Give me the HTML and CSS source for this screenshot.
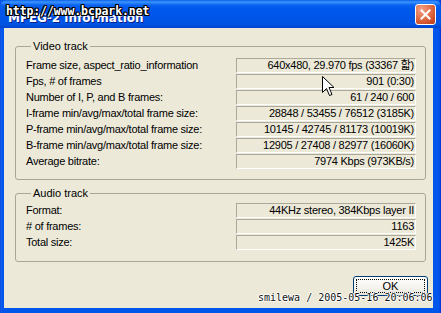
FILE: index.html
```html
<!DOCTYPE html>
<html>
<head>
<meta charset="utf-8">
<link rel="stylesheet" href="styles.css">
</head>
<body>
<div class="window">
  <div class="titlebar">
    <span class="title">MPEG-2 information</span>
    <button class="close" aria-label="Close">
      <svg width="11" height="11" viewBox="0 0 11 11"><path d="M1.5 1.5 L9.5 9.5 M9.5 1.5 L1.5 9.5" stroke="#fff" stroke-width="2" stroke-linecap="square"/></svg>
    </button>
    <span class="title-mark">http://www.bcpark.net</span>
  </div>
  <div class="client">
    <fieldset class="group video">
      <legend>Video track</legend>
      <div class="rows">
        <span class="label">Frame size, aspect_ratio_information</span><span class="value">640x480, 29.970 fps (33367 핣)</span>
        <span class="label">Fps, # of frames</span><span class="value">901 (0:30)</span>
        <span class="label">Number of I, P, and B frames:</span><span class="value">61 / 240 / 600</span>
        <span class="label">I-frame min/avg/max/total frame size:</span><span class="value">28848 / 53455 / 76512 (3185K)</span>
        <span class="label">P-frame min/avg/max/total frame size:</span><span class="value">10145 / 42745 / 81173 (10019K)</span>
        <span class="label">B-frame min/avg/max/total frame size:</span><span class="value">12905 / 27408 / 82977 (16060K)</span>
        <span class="label">Average bitrate:</span><span class="value">7974 Kbps (973KB/s)</span>
      </div>
    </fieldset>
    <fieldset class="group audio">
      <legend>Audio track</legend>
      <div class="rows">
        <span class="label">Format:</span><span class="value">44KHz stereo, 384Kbps layer II</span>
        <span class="label"># of frames:</span><span class="value">1163</span>
        <span class="label">Total size:</span><span class="value">1425K</span>
      </div>
    </fieldset>
    <div class="actions"><button class="ok"><span class="focus">OK</span></button></div>
  </div>
  <div class="watermark">smilewa / 2005-05-16 20:06:06</div>
  <svg class="cursor" width="13" height="21" viewBox="0 0 13 21"><path d="M0.5 0.5 L0.5 16.5 L4.5 12.5 L7.5 19.5 L10 18.5 L7 11.5 L12 11.5 Z" fill="#fff" stroke="#000" stroke-width="1" stroke-linejoin="miter"/></svg>
</div>
</body>
</html>
```

FILE: styles.css
```css
html, body {
  margin: 0;
  padding: 0;
  background: #ECE9D8;
}
.window {
  position: relative;
  width: 441px;
  height: 313px;
  box-sizing: border-box;
  display: flex;
  flex-direction: column;
  background: linear-gradient(to right, #0831D9 0, #166AEE 1px, #0055EA 2px, #0055EA calc(100% - 2px), #0831D9 100%);
  font-family: "Liberation Sans", Arial, sans-serif;
  font-size: 11px;
  color: #000;
  overflow: hidden;
}
.titlebar {
  position: relative;
  height: 28px;
  flex: none;
  display: flex;
  align-items: center;
  justify-content: space-between;
  padding: 0 5px 0 8px;
  background: linear-gradient(to bottom, #0A5FE6 0, #3D95FF 2px, #0A63F0 5px, #0058EE 9px, #0055E8 18px, #0054E3 24px, #0049D6 27px, #003DCB 28px);
  border-radius: 7px 7px 0 0;
}
.title {
  font-family: "DejaVu Sans", sans-serif;
  font-weight: bold;
  font-size: 12px;
  color: #fff;
  margin-top: 7px;
  text-shadow: 1px 1px 0 #0A1E8C;
}
.title-mark {
  position: absolute;
  left: 6px;
  top: 4px;
  font-family: "DejaVu Sans Mono", monospace;
  font-weight: bold;
  font-size: 11.5px;
  letter-spacing: -0.1px;
  color: #fff;
  text-shadow: 1px 0 0 #000, -1px 0 0 #000, 0 1px 0 #000, 0 -1px 0 #000, 1px 1px 0 #000, -1px -1px 0 #000, 1px -1px 0 #000, -1px 1px 0 #000;
}
.close {
  width: 21px;
  height: 21px;
  padding: 0;
  margin: 0;
  border: 1px solid #fff;
  border-radius: 3px;
  background: radial-gradient(circle at 30% 25%, #F0A088 0, #E5764F 40%, #CC4A26 80%, #B8391A 100%);
  display: flex;
  align-items: center;
  justify-content: center;
  margin-top: 1px;
}
.client {
  flex: 1;
  margin: 0 8px 5px 4px;
  background: #ECE9D8;
  padding: 12px 7px 0 11px;
  display: flex;
  flex-direction: column;
}
.group {
  margin: 0;
  border: 1px solid #A8A797;
  border-radius: 3px;
  padding: 5px 9px 10px 10px;
  min-width: 0;
}
.group legend {
  padding: 0 2px;
  margin-left: 5px;
  line-height: 13px;
  color: #000;
}
.audio {
  margin-top: 7px;
  padding-top: 3px;
  padding-bottom: 11px;
}
.rows {
  display: grid;
  grid-template-columns: 1fr 180px;
  row-gap: 1px;
}
.label {
  line-height: 15px;
  height: 15px;
  white-space: nowrap;
  letter-spacing: -0.25px;
}
.value {
  height: 15px;
  box-sizing: border-box;
  line-height: 13px;
  border-style: solid;
  border-width: 1px;
  border-color: #ACA899 #FFFFFF #FFFFFF #ACA899;
  text-align: right;
  padding-right: 1px;
  white-space: nowrap;
  letter-spacing: -0.25px;
  font-family: "Liberation Sans", "Noto Sans CJK KR", sans-serif;
}
.actions {
  display: flex;
  justify-content: flex-end;
  margin-top: 14px;
  margin-right: -2px;
}
.ok {
  width: 75px;
  height: 20px;
  padding: 2px;
  border: 1px solid #003C74;
  border-radius: 3px;
  background: linear-gradient(to bottom, #FFFFFF 0, #F4F3EE 60%, #E3E1D6 100%);
  font-family: "Liberation Sans", Arial, sans-serif;
  font-size: 11px;
  color: #000;
  display: flex;
}
.focus {
  flex: 1;
  border: 1px dotted #000;
  line-height: 12px;
  text-align: center;
}
.watermark {
  position: absolute;
  left: 258px;
  top: 292px;
  font-family: "DejaVu Sans Mono", monospace;
  font-size: 10px;
  line-height: 12px;
  color: #111;
  text-shadow: 1px 0 0 #fff, -1px 0 0 #fff, 0 1px 0 #fff, 0 -1px 0 #fff;
  white-space: nowrap;
}
.cursor {
  position: absolute;
  left: 322px;
  top: 76px;
}
```
